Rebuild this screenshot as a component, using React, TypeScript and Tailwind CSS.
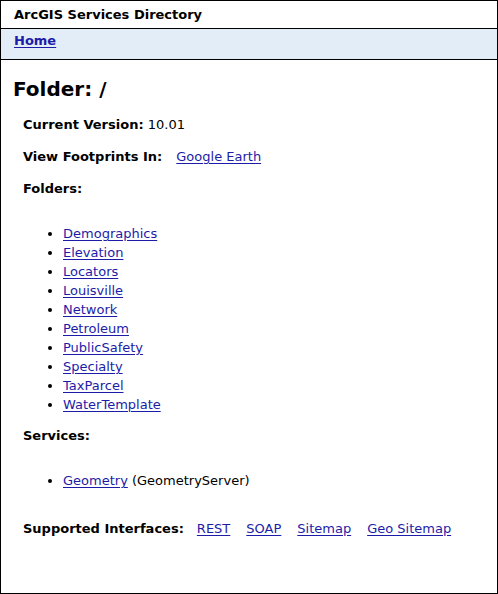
const folders = [
  'Demographics',
  'Elevation',
  'Locators',
  'Louisville',
  'Network',
  'Petroleum',
  'PublicSafety',
  'Specialty',
  'TaxParcel',
  'WaterTemplate',
];

const interfaces = ['REST', 'SOAP', 'Sitemap', 'Geo Sitemap'];

const linkCls = 'text-[#1c1ca8] underline underline-offset-2';

const App = () => {
  return (
    <div
      className="w-[498px] h-[594px] border border-black bg-white text-[13px] text-black flex flex-col"
      style={{ fontFamily: '"DejaVu Sans", Verdana, sans-serif' }}
    >
      <div className="h-[28px] border-b border-black pl-[13px] flex items-center font-bold">
        ArcGIS Services Directory
      </div>
      <div className="h-[31px] border-b border-black bg-[#e3edf7] pl-[13px] pt-[2px] font-bold">
        <a className={linkCls} href="#">
          Home
        </a>
      </div>
      <div className="pl-[12px] pt-[16px]">
        <h2 className="text-[20px] font-bold leading-[26px]">Folder: /</h2>
        <div className="pl-[10px] pt-[15px]">
          <p className="leading-[16px]">
            <b>Current Version:</b> 10.01
          </p>
          <p className="leading-[16px] mt-[16px]">
            <b>View Footprints In:</b>
            <a className={`${linkCls} ml-[14px]`} href="#">
              Google Earth
            </a>
          </p>
          <p className="leading-[16px] mt-[16px] font-bold">Folders:</p>
          <ul className="list-disc pl-[40px] mt-[27px]">
            {folders.map((f) => (
              <li key={f} className="leading-[19px]">
                <a className={linkCls} href="#">
                  {f}
                </a>
              </li>
            ))}
          </ul>
          <p className="leading-[16px] mt-[14px] font-bold">Services:</p>
          <ul className="list-disc pl-[40px] mt-[27px]">
            <li className="leading-[19px]">
              <a className={linkCls} href="#">
                Geometry
              </a>{' '}
              (GeometryServer)
            </li>
          </ul>
          <p className="leading-[16px] mt-[31px] flex gap-[16px]">
            <b className="mr-[-3px]">Supported Interfaces:</b>
            {interfaces.map((i) => (
              <a key={i} className={linkCls} href="#">
                {i}
              </a>
            ))}
          </p>
        </div>
      </div>
    </div>
  );
};

export default App;
